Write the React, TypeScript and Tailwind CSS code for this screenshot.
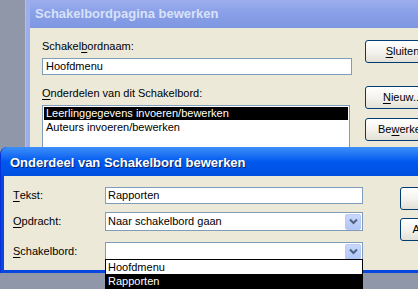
import React from "react";

const font = { fontFamily: '"Liberation Sans", Arial, sans-serif' };

function U({ c }: { c: string }) {
  return <span className="underline underline-offset-[2px]">{c}</span>;
}

function Btn({ children }: { children: React.ReactNode }) {
  return (
    <div className="w-[75px] h-[23px] shrink-0 rounded-[3px] border border-[#003c74] bg-gradient-to-b from-[#ffffff] via-[#f4f3ee] to-[#e3e1d6] flex items-center justify-center text-[11px] text-black leading-none">
      {children}
    </div>
  );
}

function Chevron() {
  return (
    <div className="w-[16px] h-[16px] shrink-0 rounded-[2px] bg-gradient-to-b from-[#c9d8fc] to-[#b0c6f7] border border-[#b9cbf3] flex items-center justify-center">
      <svg width="9" height="7" viewBox="0 0 9 7">
        <path d="M1 1.5 L4.5 5 L8 1.5" stroke="#4d6185" strokeWidth="2" fill="none" />
      </svg>
    </div>
  );
}

export default function App() {
  return (
    <div className="relative w-[418px] h-[289px] overflow-hidden bg-[#8f97a8]" style={font}>
      {/* Window 1 - inactive */}
      <div className="absolute left-[25px] top-[-4px] w-[440px] h-[200px] border-l border-[#b8bfd2] bg-[#9eaeea] pl-[4px]">
        <div className="h-[32px] bg-gradient-to-b from-[#a2b3ee] via-[#8aa0e8] to-[#7f97e2] flex items-end pb-[8px] pl-[5px]">
          <span className="text-[13px] font-bold text-[#d8e2f8] leading-none whitespace-nowrap">Schakelbordpagina bewerken</span>
        </div>
        <div className="bg-[#ece9d8] h-[170px] pl-[12px] pt-[12px] flex">
          <div className="w-[310px] shrink-0 flex flex-col">
            <div className="text-[11px] leading-[13px] h-[17px] text-black">Schakel<U c="b" />ordnaam:</div>
            <div className="h-[17px] mt-[1px] bg-white border border-[#7f9db9] text-[11px] leading-[15px] pl-[3px] text-black">Hoofdmenu</div>
            <div className="text-[11px] leading-[13px] mt-[12px] text-black whitespace-nowrap"><U c="O" />nderdelen van dit Schakelbord:</div>
            <div className="mt-[5px] w-[308px] h-[80px] bg-white border border-[#7f9db9] p-[1px] text-[11px] leading-[13px]">
              <div className="bg-black text-white pl-[2px] h-[13px]">Leerlinggegevens invoeren/bewerken</div>
              <div className="text-black pl-[2px] h-[13px] mt-[1px]">Auteurs invoeren/bewerken</div>
            </div>
          </div>
          <div className="flex flex-col ml-[13px] shrink-0">
            <Btn><U c="S" />luiten</Btn>
            <div className="mt-[23px]"><Btn><U c="N" />ieuw...</Btn></div>
            <div className="mt-[9px]"><Btn>Be<U c="w" />erken</Btn></div>
          </div>
        </div>
      </div>

      {/* Window 2 - active */}
      <div className="absolute left-0 top-[147px] w-[480px] h-[126px] rounded-t-[7px] bg-[#0747e0] overflow-hidden border-l-[1px] border-[#0831d9]">
        <div className="h-[29px] bg-gradient-to-b from-[#3d8ff8] via-[#0058ee] to-[#0050e0] flex items-end pb-[7px] pl-[9px]">
          <span className="text-[13px] font-bold text-white leading-none whitespace-nowrap" style={{ textShadow: "1px 1px 0 #0a246a" }}>Onderdeel van Schakelbord bewerken</span>
        </div>
        <div className="ml-[3px] h-[94px] bg-[#ece9d8] flex pt-[11px]">
          <div className="w-[101px] shrink-0 flex flex-col pl-[9px] text-[11px] leading-[13px] text-black">
            <div className="h-[17px] flex items-center"><U c="T" />ekst:</div>
            <div className="h-[18px] mt-[8px] flex items-center"><U c="O" />pdracht:</div>
            <div className="h-[18px] mt-[12px] flex items-center"><U c="S" />chakelbord:</div>
          </div>
          <div className="w-[258px] shrink-0 flex flex-col">
            <div className="h-[17px] bg-white border border-[#7f9db9] text-[11px] leading-[15px] pl-[2px] text-black">Rapporten</div>
            <div className="h-[19px] mt-[8px] bg-white border border-[#7f9db9] flex items-center justify-between pl-[2px] pr-[1px] text-[11px] text-black">
              <span>Naar schakelbord gaan</span>
              <Chevron />
            </div>
            <div className="h-[19px] mt-[11px] bg-white border border-[#7f9db9] flex items-center justify-end pr-[1px]">
              <Chevron />
            </div>
          </div>
          <div className="flex flex-col ml-[37px] shrink-0">
            <Btn>OK</Btn>
            <div className="mt-[8px]"><Btn>Annuleren</Btn></div>
          </div>
        </div>
      </div>

      {/* Dropdown list */}
      <div className="absolute left-[105px] top-[259px] w-[258px] h-[32px] bg-white border border-black text-[11px] leading-[14px]">
        <div className="h-[14px] pl-[2px] text-black">Hoofdmenu</div>
        <div className="h-[16px] pl-[2px] bg-black text-white">Rapporten</div>
      </div>
    </div>
  );
}
